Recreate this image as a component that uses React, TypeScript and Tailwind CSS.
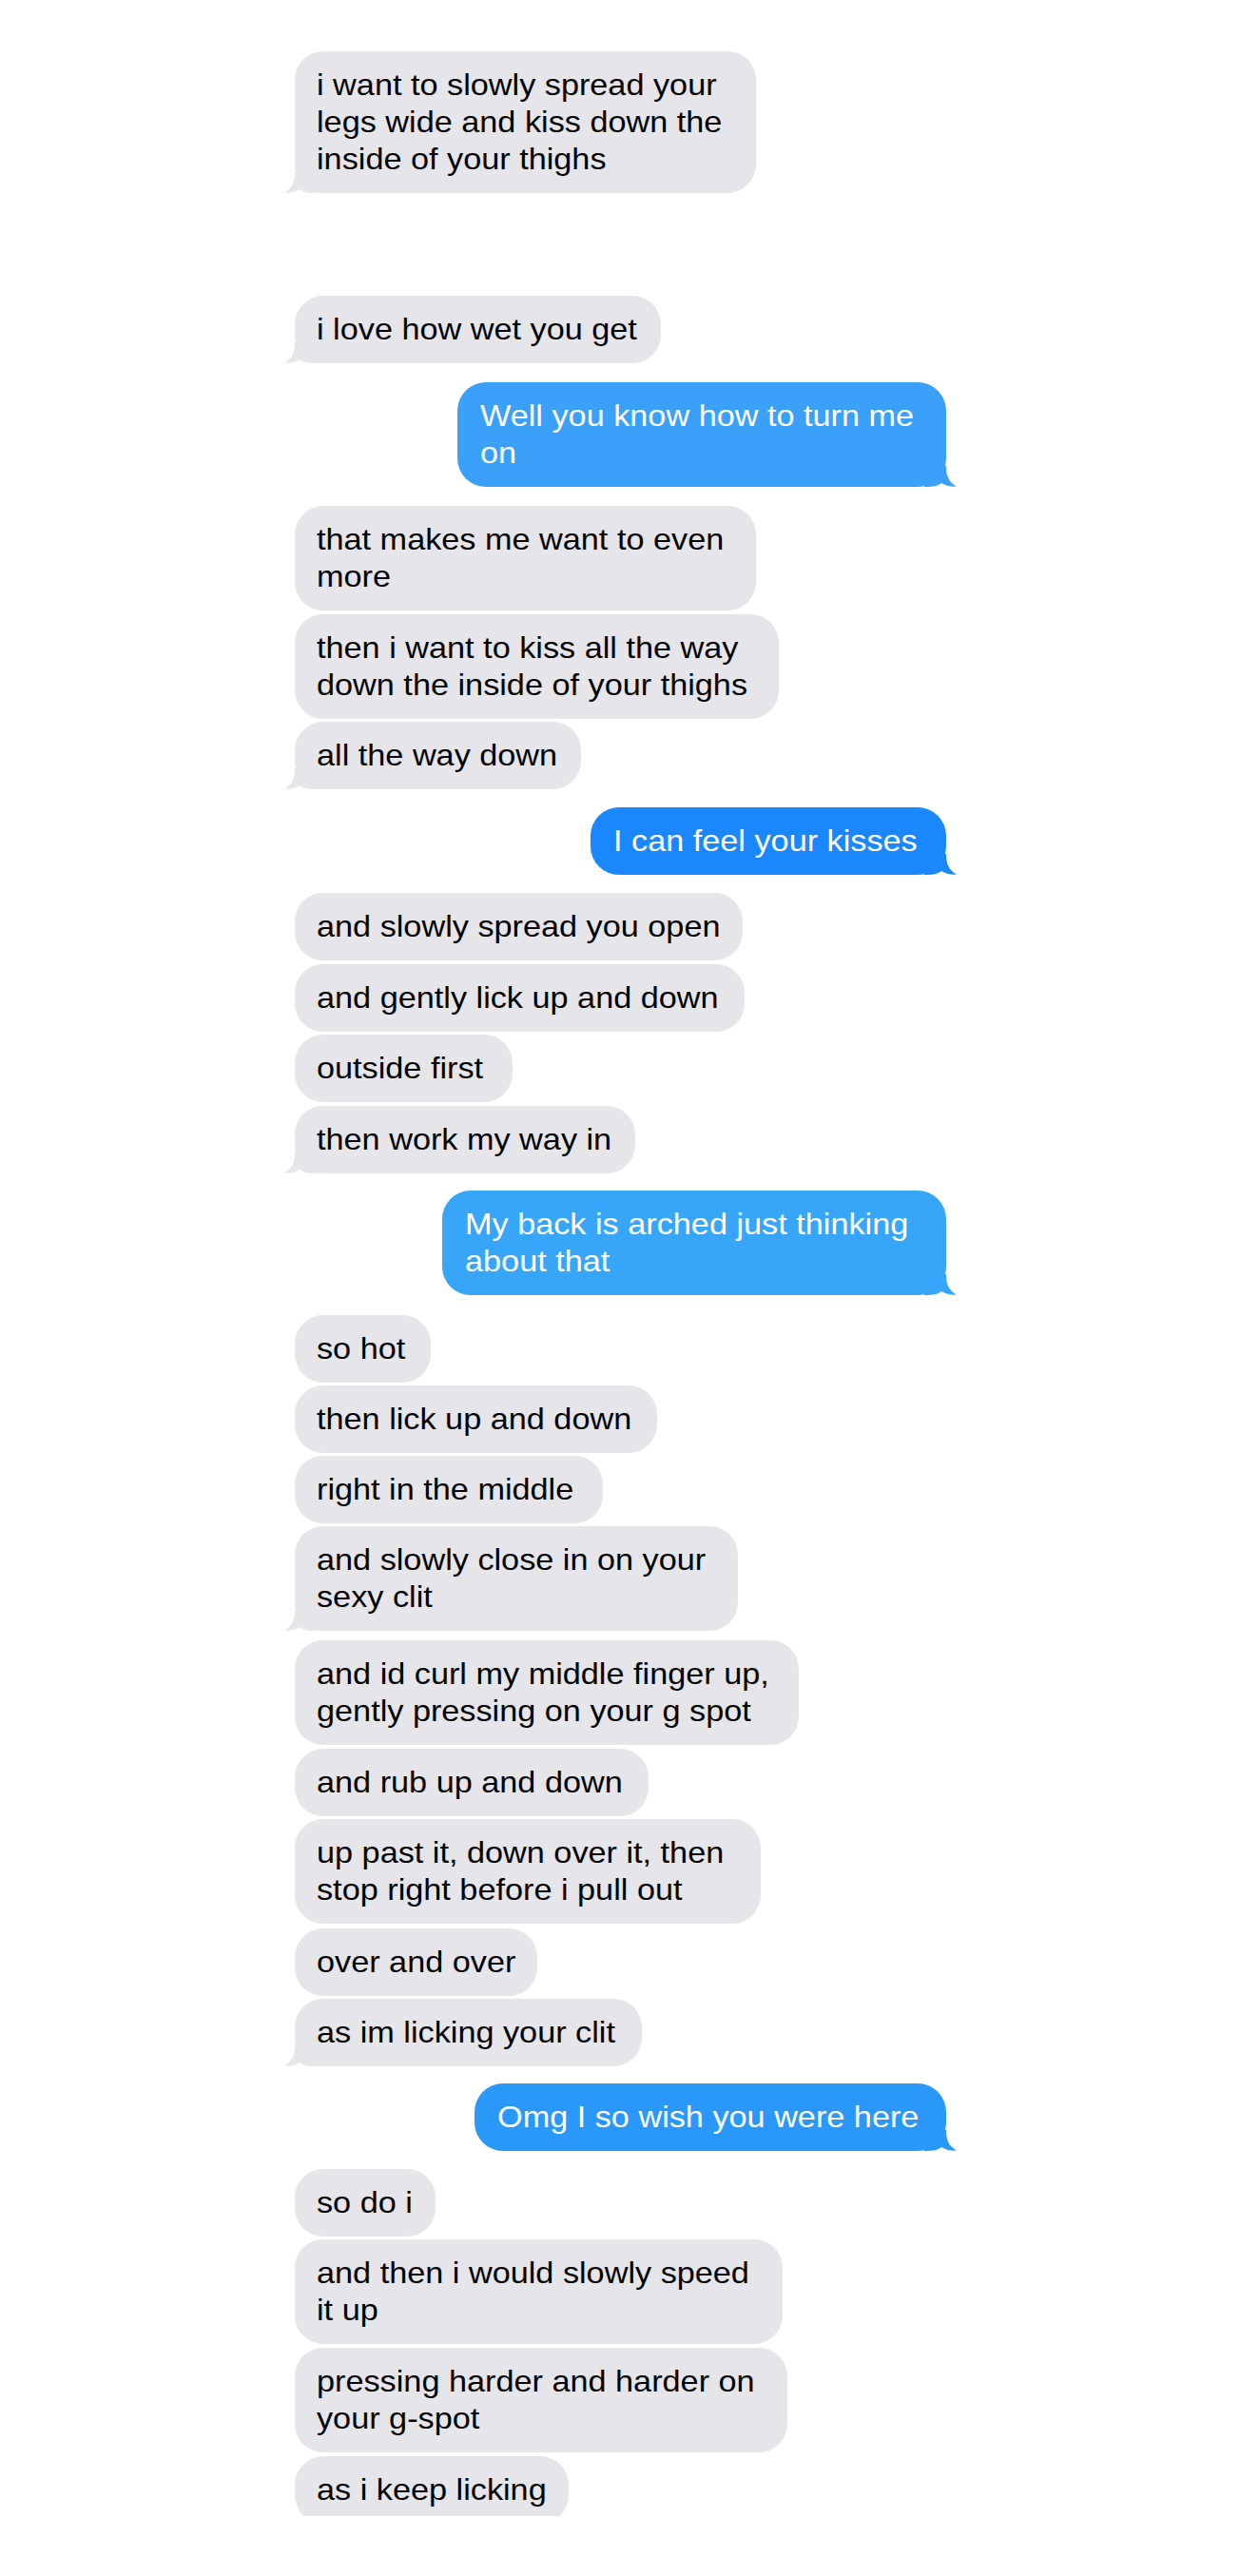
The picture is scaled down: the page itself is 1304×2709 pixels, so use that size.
import React from 'react';

type Msg = {
  lines: string[];
  me?: boolean;
  tail?: boolean;
  w: string; // bubble width class
  mt: string; // gap above
  cut?: boolean; // bottom of the screenshot cuts the bubble
  shade?: string; // blue shade differs per stitched screenshot
};

const messages: Msg[] = [
  { lines: ['i want to slowly spread your', 'legs wide and kiss down the', 'inside of your thighs'], tail: true, w: 'w-[485px]', mt: 'mt-[54px]' },
  { lines: ['i love how wet you get'], tail: true, w: 'w-[385px]', mt: 'mt-[108px]' },
  { lines: ['Well you know how to turn me', 'on'], me: true, tail: true, w: 'w-[514px]', mt: 'mt-[20px]', shade: '#3aa0f8' },
  { lines: ['that makes me want to even', 'more'], w: 'w-[485px]', mt: 'mt-[20px]' },
  { lines: ['then i want to kiss all the way', 'down the inside of your thighs'], w: 'w-[509px]', mt: 'mt-[4px]' },
  { lines: ['all the way down'], tail: true, w: 'w-[301px]', mt: 'mt-[3px]' },
  { lines: ['I can feel your kisses'], me: true, tail: true, w: 'w-[374px]', mt: 'mt-[19px]', shade: '#1a87fc' },
  { lines: ['and slowly spread you open'], w: 'w-[471px]', mt: 'mt-[19px]' },
  { lines: ['and gently lick up and down'], w: 'w-[473px]', mt: 'mt-[4px]' },
  { lines: ['outside first'], w: 'w-[229px]', mt: 'mt-[3px]' },
  { lines: ['then work my way in'], tail: true, w: 'w-[358px]', mt: 'mt-[4px]' },
  { lines: ['My back is arched just thinking', 'about that'], me: true, tail: true, w: 'w-[530px]', mt: 'mt-[18px]', shade: '#38a6f8' },
  { lines: ['so hot'], w: 'w-[143px]', mt: 'mt-[21px]' },
  { lines: ['then lick up and down'], w: 'w-[381px]', mt: 'mt-[3px]' },
  { lines: ['right in the middle'], w: 'w-[324px]', mt: 'mt-[3px]' },
  { lines: ['and slowly close in on your', 'sexy clit'], tail: true, w: 'w-[466px]', mt: 'mt-[3px]' },
  { lines: ['and id curl my middle finger up,', 'gently pressing on your g spot'], w: 'w-[530px]', mt: 'mt-[10px]' },
  { lines: ['and rub up and down'], w: 'w-[372px]', mt: 'mt-[4px]' },
  { lines: ['up past it, down over it, then', 'stop right before i pull out'], w: 'w-[490px]', mt: 'mt-[3px]' },
  { lines: ['over and over'], w: 'w-[255px]', mt: 'mt-[5px]' },
  { lines: ['as im licking your clit'], tail: true, w: 'w-[365px]', mt: 'mt-[3px]' },
  { lines: ['Omg I so wish you were here'], me: true, tail: true, w: 'w-[496px]', mt: 'mt-[18px]', shade: '#2a98f8' },
  { lines: ['so do i'], w: 'w-[148px]', mt: 'mt-[19px]' },
  { lines: ['and then i would slowly speed', 'it up'], w: 'w-[513px]', mt: 'mt-[3px]' },
  { lines: ['pressing harder and harder on', 'your g-spot'], w: 'w-[518px]', mt: 'mt-[4px]' },
  { lines: ['as i keep licking'], w: 'w-[288px]', mt: 'mt-[4px]', cut: true },
];

const Tail = ({ me, fill }: { me?: boolean; fill: string }) => (
  <svg
    viewBox="0 0 34 22"
    className={
      'absolute bottom-0 h-[22px] w-[34px] ' + (me ? 'right-[-11px] -scale-x-100' : 'left-[-11px]')
    }
  >
    <path d="M11 0 C11 11 8 17 0 21.6 C6 22 12 20.5 16 18 C20 21 25 22 31 22 L34 22 L34 0 Z" fill={fill} />
  </svg>
);

const Bubble = ({ m }: { m: Msg }) => {
  const fill = m.me ? m.shade ?? '#2a98f8' : '#e5e5ea';

  const bubble = (
    <div
      className={`relative ${m.w} rounded-[30px] py-[16px] ${m.me ? 'pl-[24px] text-white' : 'pl-[23px] text-black'}`}
      style={{ backgroundColor: fill }}
    >
      <p className="origin-left scale-x-[1.07] whitespace-nowrap text-[32px] leading-[39px]">
        {m.lines.map((l, i) => (
          <React.Fragment key={i}>
            {i > 0 && <br />}
            {l}
          </React.Fragment>
        ))}
      </p>
      {m.tail && <Tail me={m.me} fill={fill} />}
    </div>
  );

  return (
    <div className={`${m.mt} ${m.me ? 'self-end' : 'self-start'}`}>
      {m.cut ? <div className="h-[63px] overflow-hidden">{bubble}</div> : bubble}
    </div>
  );
};

export default function App() {
  return (
    <div
      className="h-[2709px] w-full overflow-hidden bg-white"
      style={{ fontFamily: '"Liberation Sans", Arial, sans-serif' }}
    >
      <div className="ml-[310px] flex w-[685px] flex-col">
        {messages.map((m, i) => (
          <Bubble key={i} m={m} />
        ))}
      </div>
    </div>
  );
}
